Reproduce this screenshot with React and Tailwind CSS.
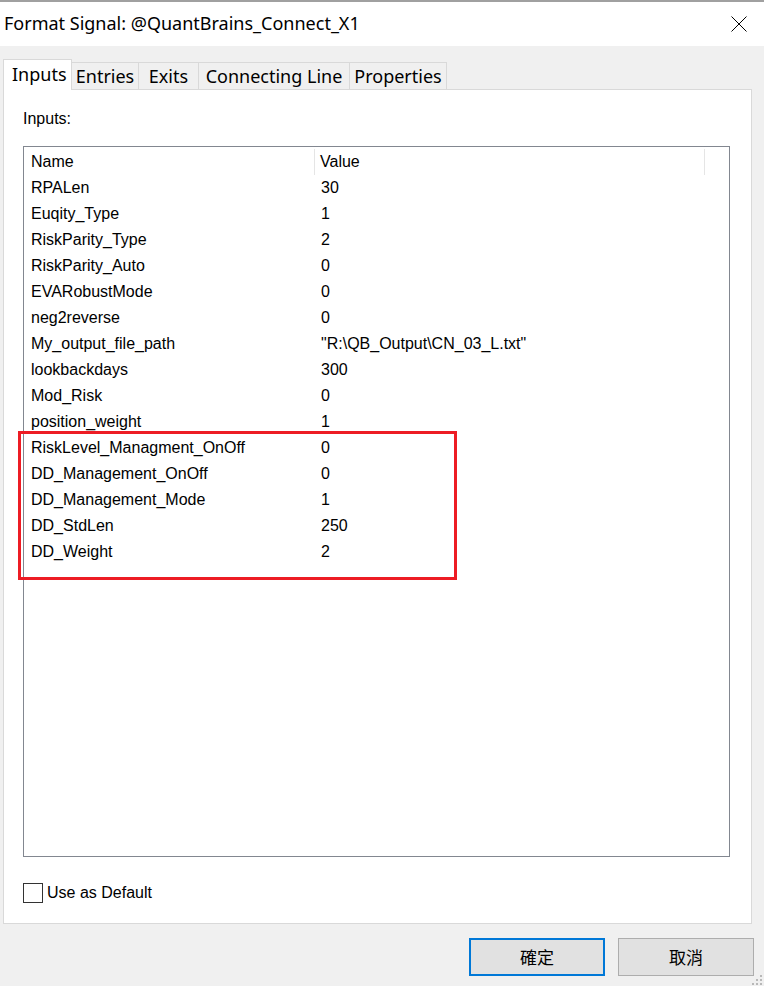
const rows = [
  ['RPALen', '30'],
  ['Euqity_Type', '1'],
  ['RiskParity_Type', '2'],
  ['RiskParity_Auto', '0'],
  ['EVARobustMode', '0'],
  ['neg2reverse', '0'],
  ['My_output_file_path', '"R:\\QB_Output\\CN_03_L.txt"'],
  ['lookbackdays', '300'],
  ['Mod_Risk', '0'],
  ['position_weight', '1'],
  ['RiskLevel_Managment_OnOff', '0'],
  ['DD_Management_OnOff', '0'],
  ['DD_Management_Mode', '1'],
  ['DD_StdLen', '250'],
  ['DD_Weight', '2'],
];

const tabs = [
  { label: 'Entries', w: 'w-[67px]' },
  { label: 'Exits', w: 'w-[60px]' },
  { label: 'Connecting Line', w: 'w-[151px]' },
  { label: 'Properties', w: 'w-[97px]' },
];

const uiFont = { fontFamily: '"Noto Sans", sans-serif' };

export default function App() {
  return (
    <div className="relative w-[764px] h-[986px] bg-[#f0f0f0] flex flex-col overflow-hidden text-black">
      <div className="h-[2px] bg-[#a0a0a0]" />
      {/* title bar */}
      <div className="h-[44px] bg-white flex items-center justify-between pl-[4px] pr-[16px]">
        <span className="text-[18px] leading-none -mt-[2px]" style={uiFont}>
          Format Signal: @QuantBrains_Connect_X1
        </span>
        <svg width="16" height="16" viewBox="0 0 16 16" className="mr-[1px]">
          <path d="M0.5 0.5 L15.5 15.5 M15.5 0.5 L0.5 15.5" stroke="#000" strokeWidth="1" fill="none" />
        </svg>
      </div>

      {/* tabs */}
      <div className="flex items-end pl-[3px] pt-[13px] relative z-10" style={uiFont}>
        <div className="w-[69px] h-[31px] bg-white border border-b-0 border-[#d9d9d9] pl-[8px] pt-[1px] text-[18px] leading-[26px] -mb-px">
          Inputs
        </div>
        {tabs.map((t) => (
          <div
            key={t.label}
            className={`${t.w} h-[27px] border border-l-0 border-b-0 border-[#d9d9d9] flex items-center justify-center text-[18px] leading-none`}
          >
            {t.label}
          </div>
        ))}
      </div>

      {/* panel */}
      <div
        className="ml-[3px] w-[749px] h-[835px] bg-white border border-[#d9d9d9] flex flex-col px-[19px]"
        style={{ fontFamily: '"Liberation Sans", Arial, sans-serif' }}
      >
        <div className="pt-[20px] text-[16px] leading-[18px]">Inputs:</div>
        <div className="mt-[18px] w-[707px] h-[711px] border border-[#828790] bg-white">
          <div className="flex h-[26px] text-[16px] mt-[2px]">
            <div className="w-[291px] pl-[7px] flex items-center border-r border-[#e5e5e5]">Name</div>
            <div className="w-[390px] pl-[5px] flex items-center border-r border-[#e5e5e5]">Value</div>
          </div>
          {rows.map(([n, v]) => (
            <div key={n} className="flex h-[26px] text-[16px] items-center">
              <div className="w-[292px] pl-[7px] whitespace-nowrap">{n}</div>
              <div className="pl-[5px] whitespace-nowrap">{v}</div>
            </div>
          ))}
        </div>
        <label className="mt-[24px] flex items-center gap-[4px] text-[16px]">
          <span className="w-[20px] h-[20px] border border-[#333333] bg-white" />
          Use as Default
        </label>
      </div>

      {/* buttons */}
      <div
        className="flex justify-end gap-[13px] pr-[10px] mt-[14px]"
        style={{ fontFamily: '"Noto Sans CJK TC", "Noto Sans", sans-serif' }}
      >
        <button className="w-[136px] h-[38px] bg-[#e1e1e1] border-2 border-[#0078d7] text-[17px] flex items-center justify-center">
          確定
        </button>
        <button className="w-[136px] h-[38px] bg-[#e1e1e1] border border-[#adadad] text-[17px] flex items-center justify-center">
          取消
        </button>
      </div>

      {/* resize grip */}
      <svg className="absolute right-[2px] bottom-[1px]" width="10" height="10" viewBox="0 0 10 10">
        <rect x="8" y="0" width="2" height="2" fill="#b8b8b8" />
        <rect x="4" y="4" width="2" height="2" fill="#b8b8b8" />
        <rect x="8" y="4" width="2" height="2" fill="#b8b8b8" />
        <rect x="0" y="8" width="2" height="2" fill="#b8b8b8" />
        <rect x="4" y="8" width="2" height="2" fill="#b8b8b8" />
        <rect x="8" y="8" width="2" height="2" fill="#b8b8b8" />
      </svg>

      {/* red highlight annotation */}
      <div className="absolute left-[18px] top-[431px] w-[439px] h-[149px] border-[3px] border-[#ed1c24] pointer-events-none" />
    </div>
  );
}
